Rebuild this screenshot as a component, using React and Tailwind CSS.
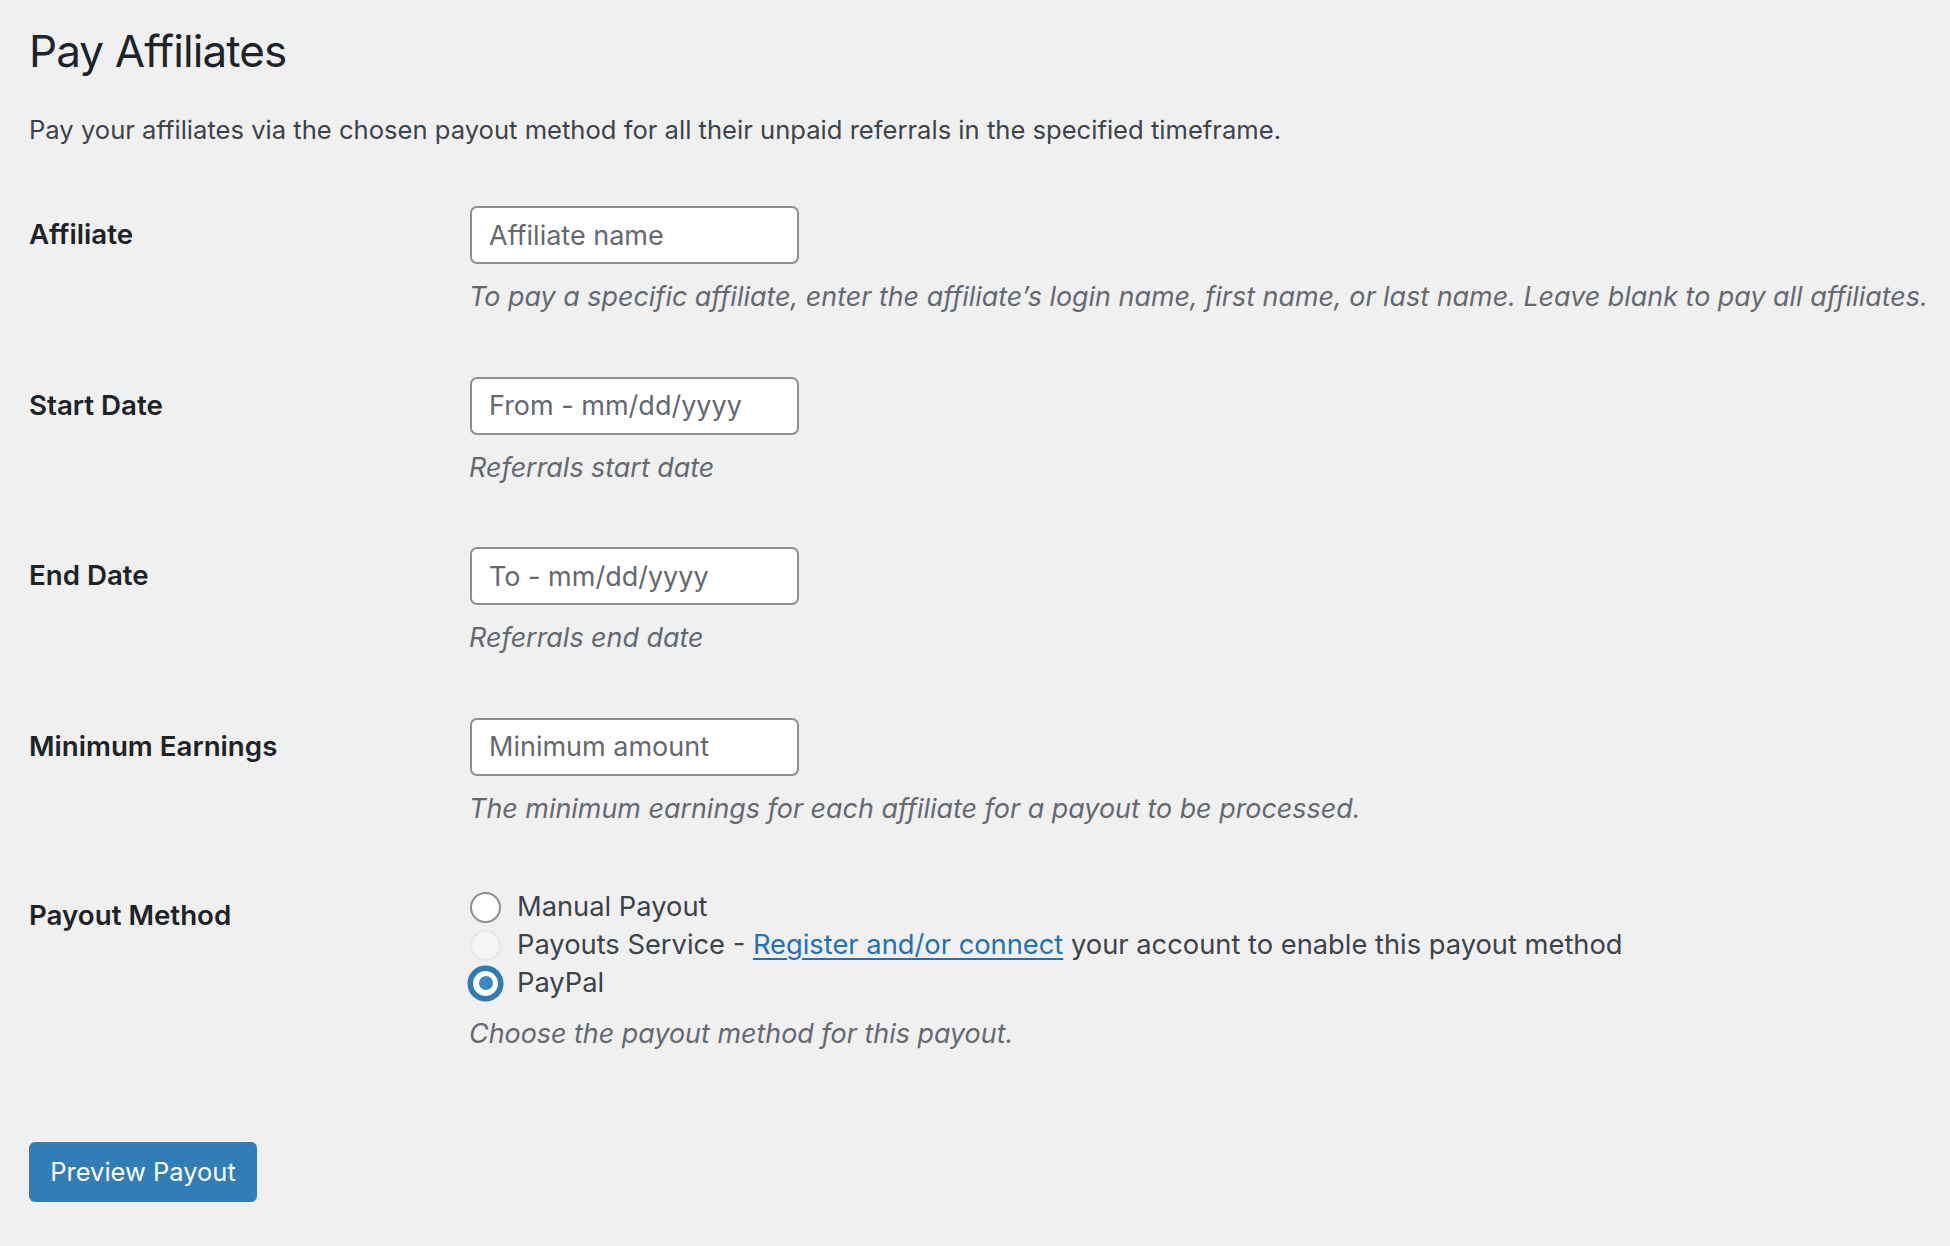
export default function App() {
  const rows = [
    { label: "Affiliate", placeholder: "Affiliate name", desc: "To pay a specific affiliate, enter the affiliate\u2019s login name, first name, or last name. Leave blank to pay all affiliates." },
    { label: "Start Date", placeholder: "From - mm/dd/yyyy", desc: "Referrals start date" },
    { label: "End Date", placeholder: "To - mm/dd/yyyy", desc: "Referrals end date" },
    { label: "Minimum Earnings", placeholder: "Minimum amount", desc: "The minimum earnings for each affiliate for a payout to be processed." },
  ];
  return (
    <div className="min-h-screen w-full bg-[#f0f0f1] pl-[29px] pt-[23px] font-['Inter',_'Roboto',_sans-serif] text-[#3c434a]">
      <h1 className="text-[44px] leading-[56px] font-normal text-[#1d2327] tracking-[-0.9px]">Pay Affiliates</h1>
      <p className="mt-[33px] text-[25.6px] leading-[36px] text-[#3c434a]">
        Pay your affiliates via the chosen payout method for all their unpaid referrals in the specified timeframe.
      </p>
      <div className="mt-[58px] flex flex-col">
        {rows.map((r) => (
          <div key={r.label} className="flex h-[170.5px]">
            <div className="w-[441px] shrink-0 pt-[8px] text-[27.7px] leading-[40px] font-semibold text-[#1d2327]">{r.label}</div>
            <div className="flex flex-col">
              <input
                type="text"
                placeholder={r.placeholder}
                className="h-[58px] w-[329px] rounded-[7px] border-2 border-[#8c8f94] bg-white px-[17px] text-[27px] text-[#2c3338] placeholder:text-[#646970] outline-none"
              />
              <p className="mt-[14px] -ml-[1px] text-[26.9px] leading-[36px] italic text-[#646970]">{r.desc}</p>
            </div>
          </div>
        ))}
        <div className="flex">
          <div className="w-[441px] shrink-0 pt-[7px] text-[27.7px] leading-[40px] font-semibold text-[#1d2327]">Payout Method</div>
          <div className="flex flex-col">
            <div className="flex flex-col text-[27.3px] leading-[38px] text-[#3c434a]">
              <label className="flex items-center">
                <span className="h-[31px] w-[31px] rounded-full border-2 border-[#8c8f94] bg-white" />
                <span className="ml-[16px]">Manual Payout</span>
              </label>
              <label className="flex items-center">
                <span className="h-[31px] w-[31px] rounded-full border-2 border-[#e6e6e7] bg-[#f5f5f6]" />
                <span className="ml-[16px]">
                  Payouts Service - <a href="#" className="text-[#2271b1] underline underline-offset-[4px]">Register and/or connect</a> your account to enable this payout method
                </span>
              </label>
              <label className="flex items-center">
                <span className="flex h-[31px] w-[31px] items-center justify-center rounded-full border-[3px] border-[#2f7bb5] bg-white shadow-[0_0_0_2.5px_#2f7bb5]">
                  <span className="h-[14px] w-[14px] rounded-full bg-[#3a89c0]" />
                </span>
                <span className="ml-[16px]">PayPal</span>
              </label>
            </div>
            <p className="mt-[13px] -ml-[1px] text-[26.9px] leading-[36px] italic text-[#646970]">Choose the payout method for this payout.</p>
          </div>
        </div>
      </div>
      <button className="mt-[91px] h-[60px] w-[228px] rounded-[6px] bg-[#317db5] text-[25.5px] text-white">Preview Payout</button>
    </div>
  );
}
